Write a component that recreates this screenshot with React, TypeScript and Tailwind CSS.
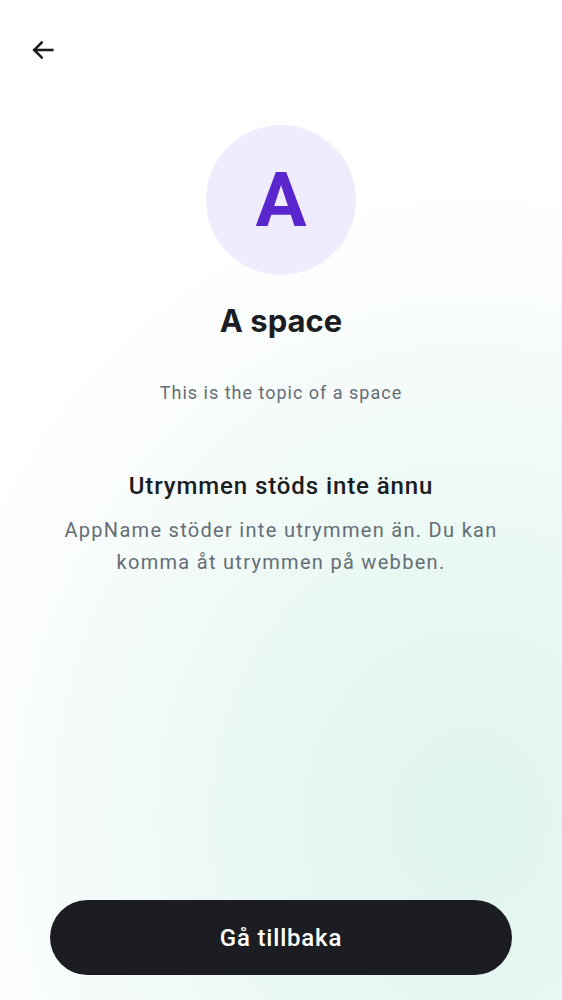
import React from "react";

export default function App() {
  return (
    <div
      className="relative w-[562px] h-[1000px] overflow-hidden flex flex-col bg-white"
      style={{
        fontFamily: "Roboto, 'Noto Sans', sans-serif",
        backgroundImage:
          "radial-gradient(ellipse 560px 640px at 470px 820px, #dff5ee 0%, #e9f8f3 40%, #f5fbf9 70%, rgba(255,255,255,0) 100%)",
      }}
    >
      <div className="h-[100px] flex items-center pl-[29px]">
        <svg width="28" height="28" viewBox="0 0 24 24" fill="none" stroke="#1b1d22" strokeWidth="2.2" strokeLinecap="square">
          <path d="M20 12H5" />
          <path d="M11 5.5L4.5 12 11 18.5" strokeLinecap="round" strokeLinejoin="miter" />
        </svg>
      </div>
      <div className="flex flex-col items-center mt-[25px]">
        <div className="w-[150px] h-[150px] rounded-full bg-[#efedfd] flex items-center justify-center">
          <span className="text-[76px] font-bold text-[#5a27cf] leading-none">A</span>
        </div>
        <h1 className="mt-[26px] text-[31px] font-bold text-[#1b1d22] leading-[40px]" style={{ fontFamily: "Inter, sans-serif" }}>A space</h1>
        <p className="mt-[40px] text-[18px] text-[#656d77] leading-[24px] tracking-[1px]">This is the topic of a space</p>
        <h2 className="mt-[66px] text-[24px] font-medium text-[#1b1d22] leading-[30px] tracking-[0.9px]">Utrymmen stöds inte ännu</h2>
        <p className="mt-[13px] text-[20px] text-[#656d77] leading-[32px] tracking-[1.3px] text-center px-[40px]">
          AppName stöder inte utrymmen än. Du kan komma åt utrymmen på webben.
        </p>
      </div>
      <div className="mt-auto px-[50px] pb-[25px]">
        <button className="w-full h-[75px] rounded-full bg-[#1c1d22] text-white text-[24px] font-medium tracking-[0.8px]">
          Gå tillbaka
        </button>
      </div>
    </div>
  );
}
